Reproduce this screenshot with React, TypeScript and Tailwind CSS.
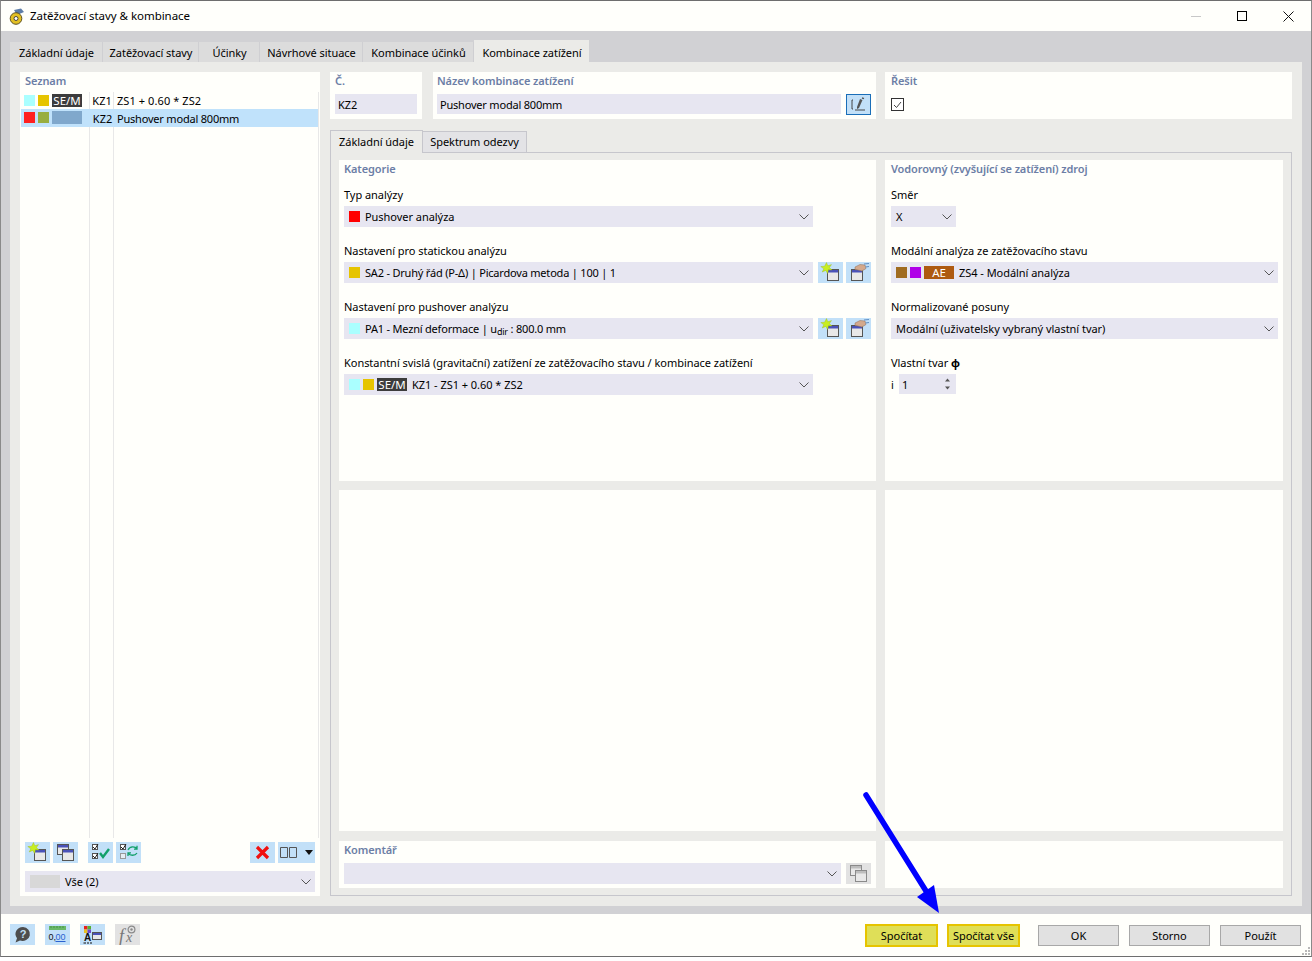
import type { ReactNode } from 'react'

const field = 'bg-[#e7e6f1]'
const blueBtn = 'bg-[#c2e0f8]'

function Chevron() {
  return (
    <svg width="10" height="6" viewBox="0 0 10 6" className="shrink-0">
      <path d="M0.5 0.5 L5 5 L9.5 0.5" fill="none" stroke="#555" strokeWidth="1" />
    </svg>
  )
}

function Swatch({ color, w = 'w-[11px]' }: { color: string; w?: string }) {
  return <span className={`inline-block h-[11px] shrink-0 ${w}`} style={{ background: color }} />
}

function Tag({ children, color }: { children: ReactNode; color: string }) {
  return (
    <span
      className="inline-flex h-[13px] w-[30px] shrink-0 items-center justify-center text-[11.5px] leading-[13px] text-white"
      style={{ background: color }}
    >
      {children}
    </span>
  )
}

function Select({ children, className = '' }: { children: ReactNode; className?: string }) {
  return (
    <div className={`flex h-[21px] items-center pl-[5px] pr-[4px] ${field} ${className}`}>
      <div className="flex min-w-0 flex-1 items-center gap-[3px] whitespace-nowrap">{children}</div>
      <Chevron />
    </div>
  )
}

function IconNew() {
  return (
    <svg width="25" height="21" viewBox="0 0 25 21">
      <rect x="9.5" y="7.5" width="11" height="11" fill="#e8e8e8" stroke="#555" />
      <rect x="10" y="8" width="10" height="2.5" fill="#4a52b8" />
      <path d="M8.5 0.5 L9.8 3.8 L13.5 2.6 L11.4 5.6 L14 8 L10.4 7.8 L9.6 11.5 L7.8 8.4 L4.2 10 L5.8 6.8 L2.8 4.6 L6.6 4.2 Z" fill="#c8ee20" stroke="#9ab81c" strokeWidth="0.4" />
    </svg>
  )
}

function IconHand() {
  return (
    <svg width="25" height="21" viewBox="0 0 25 21">
      <rect x="5.5" y="7.5" width="11" height="11" fill="#e8e8e8" stroke="#555" />
      <rect x="6" y="8" width="10" height="2.5" fill="#4a52b8" />
      <path d="M9 5 L14 2.5 L19 3 L20 6.5 L16 9 L12 8 L9 7.5 Z" fill="#d4a98c" stroke="#8d6c58" strokeWidth="0.5" />
      <path d="M18 2 L23 1.5 M19.5 5 L23 4.5" stroke="#5f8fc4" strokeWidth="1.2" />
    </svg>
  )
}

function IconCopy({ gray = false }: { gray?: boolean }) {
  const s = gray ? '#8a8a8a' : '#555'
  const bar = gray ? '#bdbdbd' : '#4a52b8'
  return (
    <svg width="25" height="21" viewBox="0 0 25 21">
      <rect x="4.5" y="2.5" width="11" height="10" fill="#e8e8e8" stroke={s} />
      <rect x="5" y="3" width="10" height="2.5" fill={bar} />
      <rect x="9.5" y="7.5" width="11" height="11" fill="#e8e8e8" stroke={s} />
      <rect x="10" y="8" width="10" height="2.5" fill={bar} />
    </svg>
  )
}

function IconCheckAll() {
  return (
    <svg width="25" height="21" viewBox="0 0 25 21">
      <rect x="4.5" y="2.5" width="5" height="5" fill="#fff" stroke="#555" />
      <path d="M5 5 L7 7 L10 2" fill="none" stroke="#222" />
      <rect x="4.5" y="11.5" width="5" height="5" fill="#fff" stroke="#555" />
      <path d="M5 14 L7 16 L10 11" fill="none" stroke="#222" />
      <path d="M12 11 L15 15 L21 7" fill="none" stroke="#12a06a" strokeWidth="2.4" />
    </svg>
  )
}

function IconCheckSwap() {
  return (
    <svg width="25" height="21" viewBox="0 0 25 21">
      <rect x="4.5" y="2.5" width="5" height="5" fill="#fff" stroke="#555" />
      <path d="M5 5 L7 7 L10 2" fill="none" stroke="#222" />
      <rect x="4.5" y="11.5" width="5" height="5" fill="#e6eef4" stroke="#999" />
      <path d="M12 8 C14 4 19 4 21 7 M21 3.8 V7.2 H18" fill="none" stroke="#12a06a" strokeWidth="1.3" />
      <path d="M21 11 C19 14 14 14 12 11 M12 14 V10.8 H15" fill="none" stroke="#12a06a" strokeWidth="1.3" />
    </svg>
  )
}

function IconRedX() {
  return (
    <svg width="25" height="21" viewBox="0 0 25 21">
      <path d="M7 5 L18 16 M18 5 L7 16" stroke="#f01010" strokeWidth="3.2" />
    </svg>
  )
}

function IconHelp() {
  return (
    <svg width="25" height="21" viewBox="0 0 25 21">
      <path d="M13 3 A7.5 7 0 1 1 10 16.6 L5.5 18.5 L7 14.2 A7.5 7 0 0 1 13 3 Z" fill="#4d4d4d" />
      <text x="13" y="14" textAnchor="middle" fontSize="11" fontWeight="700" fill="#c2e0f8" fontFamily="Liberation Sans, sans-serif">?</text>
    </svg>
  )
}

function IconDecimals() {
  return (
    <svg width="25" height="21" viewBox="0 0 25 21">
      <rect x="4" y="2" width="17" height="4" fill="#68b868" />
      <path d="M6 2 V4 M9 2 V4 M12 2 V4 M15 2 V4 M18 2 V4" stroke="#2f7a2f" strokeWidth="0.6" />
      <text x="3.5" y="15.5" fontSize="9" fill="#111" fontFamily="Liberation Sans, sans-serif">0,</text>
      <text x="10.5" y="15.5" fontSize="9" fill="#2b62d0" fontFamily="Liberation Sans, sans-serif">00</text>
      <path d="M10.5 17.5 H20.5" stroke="#2b62d0" />
    </svg>
  )
}

function IconStyle() {
  return (
    <svg width="25" height="21" viewBox="0 0 25 21">
      <rect x="4" y="2" width="3.5" height="3.5" fill="#e82020" />
      <rect x="7.5" y="2" width="3.5" height="3.5" fill="#58b030" />
      <rect x="4" y="5.5" width="3.5" height="3.5" fill="#e8c020" />
      <rect x="7.5" y="5.5" width="3.5" height="3.5" fill="#7048c8" />
      <text x="7.5" y="17" textAnchor="middle" fontSize="10" fontWeight="700" fill="#111" fontFamily="Liberation Sans, sans-serif">A</text>
      <path d="M3.5 19 H6 M7 19 H9 M10 19 H12" stroke="#111" />
      <rect x="12.5" y="8.5" width="9" height="7" fill="#e8e8e8" stroke="#555" />
      <rect x="13" y="9" width="8" height="2" fill="#4a52b8" />
    </svg>
  )
}

function IconFx() {
  return (
    <svg width="25" height="21" viewBox="0 0 25 21">
      <text x="4" y="18" fontSize="18" fontStyle="italic" fill="#777" fontFamily="Liberation Serif, serif">f</text>
      <text x="11" y="18" fontSize="14" fontStyle="italic" fill="#777" fontFamily="Liberation Serif, serif">x</text>
      <circle cx="16.5" cy="5.5" r="3.4" fill="none" stroke="#8a8a8a" strokeWidth="1.2" />
      <circle cx="16.5" cy="5.5" r="1.2" fill="#8a8a8a" />
    </svg>
  )
}

function IconEdit() {
  return (
    <svg width="23" height="19" viewBox="0 0 23 19">
      <path d="M6 5 H5 V14 H6" fill="none" stroke="#444" />
      <path d="M8 15 H18" stroke="#444" />
      <path d="M10 12 L13 4 L15.5 5 L12 13 L10 14 Z" fill="#555" />
      <path d="M15 3 L17 3.6" stroke="#555" strokeWidth="1.4" />
    </svg>
  )
}

function IconBtn({ children, className = '' }: { children: ReactNode; className?: string }) {
  return <div className={`flex h-[21px] w-[25px] shrink-0 items-center justify-center ${blueBtn} ${className}`}>{children}</div>
}

function Heading({ children }: { children: ReactNode }) {
  return <div className="h-[18px] text-[11px] font-semibold leading-[18px] tracking-[-0.1px] text-[#6c7ea6]">{children}</div>
}

function Label({ children }: { children: ReactNode }) {
  return <div className="mb-[3px] h-[16px] whitespace-nowrap leading-[16px]">{children}</div>
}

function ListRow({ swatches, code, name, selected = false }: { swatches: ReactNode; code: string; name: string; selected?: boolean }) {
  const line = selected ? '' : 'border-r border-[#e8e8e8]'
  return (
    <div className={`flex shrink-0 ${selected ? 'h-[18px] bg-[#c0e2fb]' : 'h-[17px]'}`}>
      <div className={`flex w-[69px] items-center gap-[3px] pb-[1px] pl-[3px] ${line}`}>{swatches}</div>
      <div className={`flex w-[24px] items-center justify-center pl-[1px] ${selected ? 'pt-[2px]' : 'pt-[1px]'} ${line}`}>{code}</div>
      <div className={`flex flex-1 items-center pl-[3px] ${selected ? 'pt-[2px] tracking-[-0.2px]' : 'pt-[1px] tracking-[0.08px]'}`}>{name}</div>
    </div>
  )
}

function FooterBtn({ children, yellow = false, className = '' }: { children: ReactNode; yellow?: boolean; className?: string }) {
  return (
    <div
      className={
        yellow
          ? `flex h-[23px] w-[73px] shrink-0 items-center justify-center border-2 border-[#e6c400] bg-[#dfdf58] pt-[1px] ${className}`
          : `mt-[1px] flex h-[21px] w-[81px] shrink-0 items-center justify-center border border-[#a8a8a8] bg-[#e1e1e1] pt-[1px] ${className}`
      }
    >
      {children}
    </div>
  )
}

function CopyWindowLink() {
  return (
    <div className="ml-[5px] flex gap-[3px]">
      <IconBtn><IconNew /></IconBtn>
      <IconBtn><IconHand /></IconBtn>
    </div>
  )
}

export default function App() {
  const white = 'bg-[#fffffb]'
  return (
    <div
      className="relative flex h-[957px] w-[1312px] flex-col border border-t-[#6e6e6e] border-r-[#8a8a8a] border-b-[#6e6e6e] border-l-[#8a8a8a] bg-[#fffffb] text-[11px] tracking-[-0.04px] text-black"
      style={{ fontFamily: '"Noto Sans", sans-serif' }}
    >
      {/* title bar */}
      <div className="flex h-[30px] shrink-0 items-center pl-[7px]">
        <svg width="17" height="17" viewBox="0 0 17 17">
          <path d="M6 2 L13 0.5 L16 4 L9 7 Z" fill="#5d7da8" />
          <circle cx="8" cy="10.5" r="5.8" fill="#e2bf22" stroke="#5c5020" />
          <circle cx="8" cy="10.5" r="2" fill="#fff" stroke="#444" />
        </svg>
        <span className="ml-[5px] text-[11.5px]">Zatěžovací stavy &amp; kombinace</span>
        <div className="ml-auto flex h-full">
          <div className="flex w-[46px] items-center justify-center">
            <span className="h-[1px] w-[10px] bg-[#c8c8c8]" />
          </div>
          <div className="flex w-[46px] items-center justify-center">
            <span className="h-[10px] w-[10px] border border-black" />
          </div>
          <div className="flex w-[46px] items-center justify-center">
            <svg width="11" height="11" viewBox="0 0 11 11">
              <path d="M0.5 0.5 L10.5 10.5 M10.5 0.5 L0.5 10.5" stroke="#111" />
            </svg>
          </div>
        </div>
      </div>

      {/* main area */}
      <div className="flex flex-1 flex-col bg-[#d1d1d4] px-[9px] pb-[8px] pt-[9px]">
        <div className="flex h-[22px] shrink-0 items-end">
          {[
            ['Základní údaje', 'w-[93px]'],
            ['Zatěžovací stavy', 'w-[96px]'],
            ['Účinky', 'w-[61px]'],
            ['Návrhové situace', 'w-[103px]'],
            ['Kombinace účinků', 'w-[111px]'],
          ].map(([label, w]) => (
            <div key={label} className={`flex h-[20px] items-center justify-center border-r border-[#cfcfd2] bg-[#dcdcdc] pl-[1px] pt-[2px] ${w}`}>
              {label}
            </div>
          ))}
          <div className="flex h-[22px] w-[115px] items-center justify-center bg-[#ebebe8] pl-[1px] pt-[4px]">Kombinace zatížení</div>
        </div>

        <div className="flex h-[844px] shrink-0 gap-[10px] bg-[#ebebe8] p-[10px]">
          {/* left list panel */}
          <div className={`flex w-[300px] flex-col ${white}`}>
            <div className="px-[5px]">
              <Heading>Seznam</Heading>
            </div>
            <div className="ml-[1px] mr-[1px] mt-[2px] flex flex-1 flex-col border-r border-[#e8e8e8]">
              <ListRow
                code="KZ1"
                name="ZS1 + 0.60 * ZS2"
                swatches={
                  <>
                    <Swatch color="#aaffff" />
                    <Swatch color="#e6c400" />
                    <Tag color="#3c3c3c">SE/M</Tag>
                  </>
                }
              />
              <ListRow
                selected
                code="KZ2"
                name="Pushover modal 800mm"
                swatches={
                  <>
                    <Swatch color="#ff2020" />
                    <Swatch color="#98ae40" />
                    <Tag color="#80a8cc">{' '}</Tag>
                  </>
                }
              />
              <div className="flex flex-1">
                <div className="w-[69px] border-r border-[#e8e8e8]" />
                <div className="w-[24px] border-r border-[#e8e8e8]" />
              </div>
            </div>
            <div className="mt-[4px] flex px-[5px]">
              <IconBtn><IconNew /></IconBtn>
              <IconBtn className="ml-[3px]"><IconCopy /></IconBtn>
              <IconBtn className="ml-[10px]"><IconCheckAll /></IconBtn>
              <IconBtn className="ml-[3px]"><IconCheckSwap /></IconBtn>
              <IconBtn className="ml-auto"><IconRedX /></IconBtn>
              <div className={`ml-[3px] flex h-[21px] w-[37px] items-center pl-[2px] ${blueBtn}`}>
                <svg width="17" height="11" viewBox="0 0 17 11">
                  <path d="M0.5 0.5 H7.5 V10.5 H0.5 Z M9.5 0.5 H16.5 V10.5 H9.5 Z" fill="none" stroke="#555" />
                </svg>
                <svg width="8" height="5" viewBox="0 0 8 5" className="ml-[8px]">
                  <path d="M0 0 H8 L4 5 Z" fill="#111" />
                </svg>
              </div>
            </div>
            <div className="mb-[4px] mt-[8px] px-[5px]">
              <Select>
                <span className="h-[13px] w-[30px] bg-[#d8d8d8]" />
                <span className="ml-[2px] pt-[1px]">Vše (2)</span>
              </Select>
            </div>
          </div>

          {/* right side */}
          <div className="flex w-[962px] flex-col">
            <div className="flex h-[47px] shrink-0">
              <div className={`w-[92px] px-[5px] ${white}`}>
                <Heading>Č.</Heading>
                <div className={`mt-[4px] flex h-[20px] items-center pl-[3px] pt-[2px] ${field}`}>KZ2</div>
              </div>
              <div className={`ml-[11px] w-[443px] pl-[4px] pr-[5px] ${white}`}>
                <Heading>Název kombinace zatížení</Heading>
                <div className="mt-[4px] flex">
                  <div className={`flex h-[20px] w-[404px] items-center pl-[3px] pt-[2px] tracking-[-0.2px] ${field}`}>Pushover modal 800mm</div>
                  <div className="ml-[5px] flex h-[21px] w-[25px] items-center justify-center border border-[#1a6eb8] bg-[#c2e0f8]">
                    <IconEdit />
                  </div>
                </div>
              </div>
              <div className={`ml-[9px] w-[407px] px-[6px] ${white}`}>
                <Heading>Řešit</Heading>
                <div className="mt-[8px] flex h-[13px] w-[13px] items-center justify-center border border-[#333] bg-white">
                  <svg width="9" height="8" viewBox="0 0 9 8">
                    <path d="M1 4 L3.5 6.5 L8 1" fill="none" stroke="#444" />
                  </svg>
                </div>
              </div>
            </div>

            <div className="mt-[11px] flex h-[22px] shrink-0 items-end">
              <div className="z-10 -mb-[1px] flex h-[23px] w-[93px] items-center justify-center border border-b-0 border-[#c6c6cc] bg-[#ebebe8] pt-[1px]">
                Základní údaje
              </div>
              <div className="flex h-[21px] w-[104px] items-center justify-center border border-b-0 border-l-0 border-[#c6c6cc] bg-[#e3e3e6] pt-[1px]">
                Spektrum odezvy
              </div>
            </div>

            <div className="grid flex-1 grid-cols-[537px_398px] grid-rows-[321px_342px_47px] gap-x-[9px] gap-y-[9px] border border-[#c6c6cc] px-[8px] pb-[7px] pt-[7px]">
              <div className={`px-[5px] ${white}`}>
                <Heading>Kategorie</Heading>
                <div className="mt-[9px] w-[532px]">
                  <Label>Typ analýzy</Label>
                  <Select className="mb-[16px] w-[469px]">
                    <Swatch color="#ff0000" />
                    <span className="ml-[2px] pt-[1px]">Pushover analýza</span>
                  </Select>
                  <Label>Nastavení pro statickou analýzu</Label>
                  <div className="mb-[16px] flex">
                    <Select className="w-[469px]">
                      <Swatch color="#e6c400" />
                      <span className="ml-[2px] pt-[1px] tracking-[-0.2px]">SA2 - Druhý řád (P-Δ) | Picardova metoda | 100 | 1</span>
                    </Select>
                    <CopyWindowLink />
                  </div>
                  <Label>Nastavení pro pushover analýzu</Label>
                  <div className="mb-[16px] flex">
                    <Select className="w-[469px]">
                      <Swatch color="#aaffff" />
                      <span className="ml-[2px] pt-[1px] tracking-[-0.2px]">
                        PA1 - Mezní deformace | u<span className="relative top-[2px] text-[9px]">dir</span> : 800.0 mm
                      </span>
                    </Select>
                    <CopyWindowLink />
                  </div>
                  <Label>Konstantní svislá (gravitační) zatížení ze zatěžovacího stavu / kombinace zatížení</Label>
                  <Select className="w-[469px]">
                    <Swatch color="#aaffff" />
                    <Swatch color="#e6c400" />
                    <Tag color="#3c3c3c">SE/M</Tag>
                    <span className="ml-[2px] pt-[1px]">KZ1 - ZS1 + 0.60 * ZS2</span>
                  </Select>
                </div>
              </div>

              <div className={`px-[6px] ${white}`}>
                <Heading>Vodorovný (zvyšující se zatížení) zdroj</Heading>
                <div className="mt-[9px]">
                  <Label>Směr</Label>
                  <Select className="mb-[16px] w-[65px]">
                    <span className="pt-[1px]">X</span>
                  </Select>
                  <Label>Modální analýza ze zatěžovacího stavu</Label>
                  <Select className="mb-[16px] w-[387px]">
                    <Swatch color="#a06c20" />
                    <Swatch color="#b000e8" />
                    <Tag color="#ae5a10">AE</Tag>
                    <span className="ml-[2px] pt-[1px]">ZS4 - Modální analýza</span>
                  </Select>
                  <Label>Normalizované posuny</Label>
                  <Select className="mb-[16px] w-[387px]">
                    <span className="pt-[1px]">Modální (uživatelsky vybraný vlastní tvar)</span>
                  </Select>
                  <Label>
                    Vlastní tvar <b>ϕ</b>
                  </Label>
                  <div className="flex items-center">
                    <span className="w-[8px] pt-[2px]">i</span>
                    <div className={`flex h-[20px] w-[57px] items-center justify-between pl-[3px] pr-[5px] ${field}`}>
                      <span className="pt-[2px]">1</span>
                      <svg width="7" height="14" viewBox="0 0 7 14">
                        <path d="M3.5 1.5 L6 4.5 H1 Z M3.5 12.5 L6 9.5 H1 Z" fill="#555" />
                      </svg>
                    </div>
                  </div>
                </div>
              </div>

              <div className={`mb-[1px] ${white}`} />
              <div className={`mb-[1px] ${white}`} />

              <div className={`px-[5px] ${white}`}>
                <Heading>Komentář</Heading>
                <div className="mt-[4px] flex">
                  <Select className="w-[497px]">{' '}</Select>
                  <IconBtn className="ml-[5px] bg-[#e2e2e2]">
                    <IconCopy gray />
                  </IconBtn>
                </div>
              </div>
              <div className={white} />
            </div>
          </div>
        </div>
      </div>

      {/* footer */}
      <div className="flex h-[42px] shrink-0 items-start pl-[9px] pr-[10px] pt-[10px]">
        <IconBtn><IconHelp /></IconBtn>
        <IconBtn className="ml-[10px]"><IconDecimals /></IconBtn>
        <IconBtn className="ml-[10px]"><IconStyle /></IconBtn>
        <IconBtn className="ml-[10px] bg-[#e2e2e2]"><IconFx /></IconBtn>
        <FooterBtn yellow className="ml-auto">Spočítat</FooterBtn>
        <FooterBtn yellow className="ml-[9px]">Spočítat vše</FooterBtn>
        <FooterBtn className="ml-[18px]">OK</FooterBtn>
        <FooterBtn className="ml-[10px]">Storno</FooterBtn>
        <FooterBtn className="ml-[10px]">Použít</FooterBtn>
      </div>

      {/* resize grip */}
      <svg width="9" height="9" viewBox="0 0 9 9" className="absolute bottom-[1px] right-[1px]">
        <path d="M7 1h2v2H7z M4 4h2v2H4z M7 4h2v2H7z M1 7h2v2H1z M4 7h2v2H4z M7 7h2v2H7z" fill="#b8b8b8" />
      </svg>

      {/* annotation arrow */}
      <svg width="1312" height="957" viewBox="0 0 1312 957" className="pointer-events-none absolute -left-[1px] -top-[1px]">
        <path d="M866 795 L926 891" stroke="#0000ff" strokeWidth="5.5" strokeLinecap="round" fill="none" />
        <path d="M939 913 L917 897 L934 885 Z" fill="#0000ff" />
      </svg>
    </div>
  )
}
